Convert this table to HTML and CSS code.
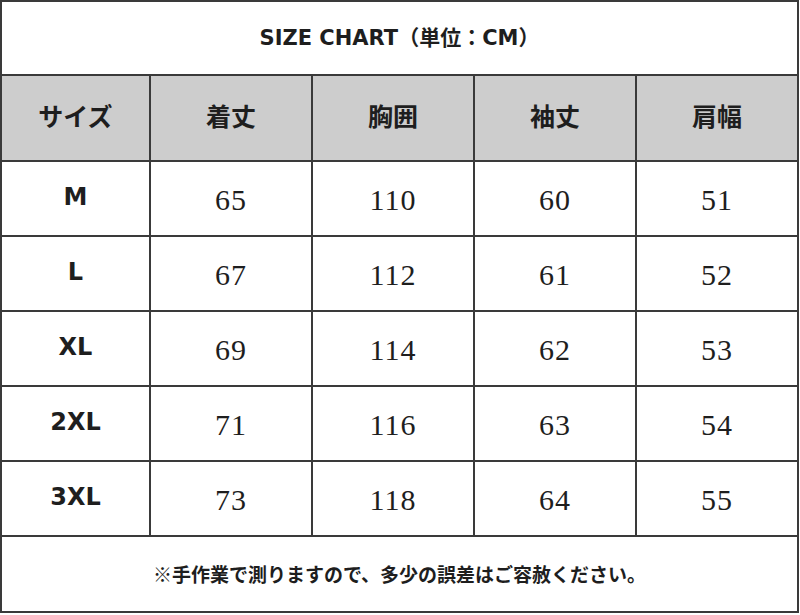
FILE: index.html
```html
<!DOCTYPE html>
<html lang="ja">
<head>
<meta charset="utf-8">
<title>SIZE CHART</title>
<link rel="stylesheet" href="styles.css">
</head>
<body>
<div class="chart">
  <div class="cell title">SIZE CHART（単位：CM）</div>

  <div class="cell head">サイズ</div>
  <div class="cell head">着丈</div>
  <div class="cell head">胸囲</div>
  <div class="cell head">袖丈</div>
  <div class="cell head">肩幅</div>

  <div class="cell size">M</div>
  <div class="cell num">65</div>
  <div class="cell num">110</div>
  <div class="cell num">60</div>
  <div class="cell num">51</div>

  <div class="cell size">L</div>
  <div class="cell num">67</div>
  <div class="cell num">112</div>
  <div class="cell num">61</div>
  <div class="cell num">52</div>

  <div class="cell size">XL</div>
  <div class="cell num">69</div>
  <div class="cell num">114</div>
  <div class="cell num">62</div>
  <div class="cell num">53</div>

  <div class="cell size">2XL</div>
  <div class="cell num">71</div>
  <div class="cell num">116</div>
  <div class="cell num">63</div>
  <div class="cell num">54</div>

  <div class="cell size">3XL</div>
  <div class="cell num">73</div>
  <div class="cell num">118</div>
  <div class="cell num">64</div>
  <div class="cell num">55</div>

  <div class="cell note">※手作業で測りますので、多少の誤差はご容赦ください。</div>
</div>
</body>
</html>
```

FILE: styles.css
```css
html, body {
  margin: 0;
  padding: 0;
  background: #ffffff;
}

.chart {
  width: 799px;
  box-sizing: border-box;
  padding: 2px;
  background: #3a3a3a;
  display: grid;
  grid-template-columns: 147px 160px 160px 160px 160px;
  grid-template-rows: 72px 84px 73px 73px 73px 73px 73px 74px;
  gap: 2px;
  color: #1e1e1e;
}

.cell {
  background: #ffffff;
  display: flex;
  align-items: center;
  justify-content: center;
}

.title {
  grid-column: 1 / -1;
  font-family: "DejaVu Sans", "Noto Sans CJK JP", sans-serif;
  font-weight: bold;
  font-size: 21px;
  padding-bottom: 5px;
}

.head {
  background: #cdcdcd;
  font-family: "Noto Sans CJK JP", sans-serif;
  font-weight: bold;
  font-size: 25px;
  padding-bottom: 6px;
}

.size {
  font-family: "DejaVu Sans", sans-serif;
  font-weight: bold;
  font-size: 24px;
  padding-bottom: 3px;
}

.num {
  font-family: "Liberation Serif", serif;
  font-size: 30px;
  letter-spacing: 1px;
  padding-top: 2px;
}

.note {
  grid-column: 1 / -1;
  font-family: "Noto Sans CJK JP", sans-serif;
  font-weight: bold;
  font-size: 19px;
  padding-bottom: 2px;
}
```
